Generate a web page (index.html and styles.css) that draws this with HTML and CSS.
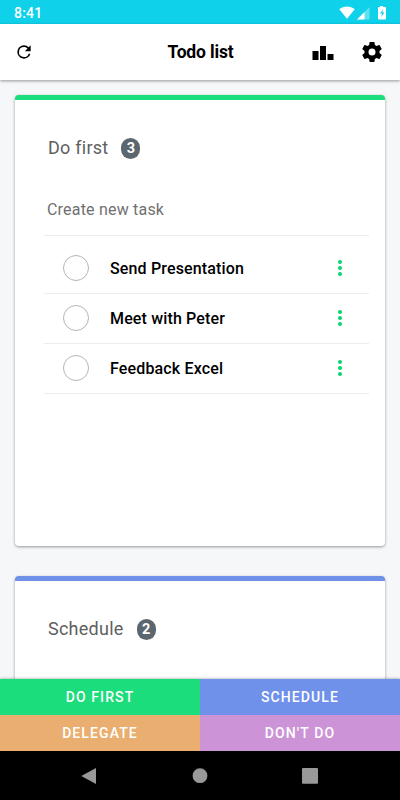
FILE: index.html
```html
<!DOCTYPE html>
<html lang="en">
<head>
    <meta charset="UTF-8">
    <meta name="viewport" content="width=device-width, initial-scale=1.0">
    <title>Todo list</title>
    <link rel="stylesheet" href="styles.css">
</head>
<body>

    <div class="status-bar">
        <span class="clock">8:41</span>
        <svg class="status-icons" width="48" height="16" viewBox="0 0 48 16">
            <path d="M0.3 4.2C4.8 0.6 11.2 0.6 15.700 4.2L8 13.800z" fill="#fff"/>
            <path d="M30.500 2v12.500H18z" fill="#fff" opacity=".35"/>
            <path d="M25.500 7v7.500H18z" fill="#fff"/>
            <path d="M39 2h2V1h3v1h2q1 0 1 1v10.500q0 1-1 1h-6q-1 0-1-1V3q0-1 1-1z" fill="#fff"/>
            <path d="M44 4.500l-3 4h2l-.8 3.500 3.300-4.500h-2z" fill="#0fd1ea"/>
        </svg>
    </div>

    <header class="toolbar">
        <button class="icon-btn refresh" aria-label="Refresh">
            <svg width="20" height="20" viewBox="0 0 24 24">
                <path d="M17.650 6.350A7.960 7.960 0 0 0 12 4a8 8 0 1 0 7.730 10h-2.080A6 6 0 1 1 12 6c1.660 0 3.140.69 4.220 1.780L13 11h7V4z"/>
            </svg>
        </button>
        <h1>Todo list</h1>
        <button class="icon-btn stats" aria-label="Statistics">
            <svg width="22" height="14" viewBox="0 0 22 14">
                <path d="M.5 5h6v9h-6zM8 0h6v14H8zM15.500 8h6v6h-6z"/>
            </svg>
        </button>
        <button class="icon-btn settings" aria-label="Settings">
            <svg width="24" height="24" viewBox="0 0 24 24">
                <path d="M19.430 12.980c.04-.32.07-.64.07-.98s-.03-.66-.07-.98l2.110-1.650c.19-.15.24-.42.12-.64l-2-3.460c-.12-.22-.39-.3-.61-.22l-2.490 1c-.52-.4-1.080-.73-1.690-.98l-.38-2.650C14.460 2.180 14.250 2 14 2h-4c-.25 0-.46.18-.49.42l-.38 2.650c-.61.25-1.170.59-1.690.98l-2.490-1c-.23-.09-.49 0-.61.22l-2 3.460c-.13.22-.07.49.12.64l2.110 1.650c-.04.32-.07.65-.07.98s.03.66.07.98l-2.110 1.650c-.19.15-.24.42-.12.64l2 3.460c.12.22.39.3.61.22l2.490-1c.52.4 1.080.73 1.690.98l.38 2.650c.03.24.24.42.49.42h4c.25 0 .46-.18.49-.42l.38-2.650c.61-.25 1.170-.59 1.690-.98l2.490 1c.23.09.49 0 .61-.22l2-3.460c.12-.22.07-.49-.12-.64zM12 15.500a3.500 3.500 0 1 1 0-7 3.500 3.500 0 0 1 0 7z"/>
            </svg>
        </button>
    </header>

    <main class="content">
        <section class="card first">
            <h2>Do first <span class="badge">3</span></h2>
            <div class="new-task">Create new task</div>
            <ul class="tasks">
                <li>
                    <span class="check"></span>
                    <span class="name">Send Presentation</span>
                    <span class="more"><i></i><i></i><i></i></span>
                </li>
                <li>
                    <span class="check"></span>
                    <span class="name">Meet with Peter</span>
                    <span class="more"><i></i><i></i><i></i></span>
                </li>
                <li>
                    <span class="check"></span>
                    <span class="name">Feedback Excel</span>
                    <span class="more"><i></i><i></i><i></i></span>
                </li>
            </ul>
        </section>

        <section class="card schedule">
            <h2>Schedule <span class="badge">2</span></h2>
        </section>
    </main>

    <nav class="tabs">
        <button class="tab tab-first">DO FIRST</button>
        <button class="tab tab-schedule">SCHEDULE</button>
        <button class="tab tab-delegate">DELEGATE</button>
        <button class="tab tab-dont">DON'T DO</button>
    </nav>

    <div class="nav-bar">
        <svg width="16" height="18" viewBox="0 0 16 18"><path d="M15 1v16L.3 9z"/></svg>
        <svg width="16" height="18" viewBox="0 0 16 18"><circle cx="8" cy="8.700" r="7.400"/></svg>
        <svg width="16" height="18" viewBox="0 0 16 18"><rect y="1" width="16" height="15.700" rx="1"/></svg>
    </div>

</body>
</html>
```
FILE: styles.css
```css
* {
    box-sizing: border-box;
}
body {
    display: flex;
    flex-direction: column;
    height: 800px;
    margin: 0;
    overflow: hidden;
    font-family: Roboto, sans-serif;
    background-color: #f6f7f9;
}
button {
    padding: 0;
    border: 0;
    background: none;
    font-family: inherit;
}
svg {
    display: block;
}

/* top bars */
.status-bar {
    display: flex;
    flex: none;
    align-items: center;
    justify-content: space-between;
    height: 24px;
    padding: 1px 13px 0 14px;
    color: #fff;
    background-color: #0fd1ea;
}
.clock {
    font-size: 14px;
    font-weight: 500;
    letter-spacing: 0.2px;
}
.toolbar {
    display: grid;
    flex: none;
    grid-template-columns: 49px 1fr 49px 49px;
    align-items: center;
    height: 56px;
    z-index: 1;
    background-color: #fff;
    box-shadow: 0 1px 3px rgba(0, 0, 0, 0.4);
}
.toolbar h1 {
    margin: 0;
    padding-left: 50px;
    padding-bottom: 1px;
    font-size: 17.5px;
    font-weight: 700;
    line-height: 20px;
    letter-spacing: -0.15px;
    text-align: center;
}
.icon-btn {
    display: flex;
    justify-content: center;
}
.refresh svg {
    margin-right: 1px;
}
.stats {
    padding: 2px 8px 0 0;
}
.settings {
    padding-right: 8px;
}

/* cards */
.content {
    flex: 1;
    min-height: 0;
    padding: 15px;
    overflow: hidden;
}
.card {
    height: 451px;
    margin-bottom: 30px;
    padding: 29px 16px 0 29px;
    border-top: 5px solid #1bdd7b;
    border-radius: 4px;
    background-color: #fff;
    box-shadow: 0 1px 3px rgba(0, 0, 0, 0.4);
}
.schedule {
    border-top-color: #6f91ea;
}
.card h2 {
    display: flex;
    align-items: center;
    gap: 13px;
    height: 36px;
    margin: 0;
    padding-left: 4px;
    font-size: 18px;
    font-weight: 400;
    letter-spacing: 0.25px;
    color: #606060;
}
.badge {
    width: 19px;
    height: 21px;
    margin-top: 3px;
    border-radius: 10px;
    font-size: 14.5px;
    font-weight: 700;
    line-height: 21px;
    letter-spacing: 0;
    text-align: center;
    color: #fff;
    background-color: #5c666e;
}
.new-task {
    height: 71px;
    padding: 35px 0 0 3px;
    border-bottom: 1px solid #ececec;
    font-size: 16px;
    line-height: 20px;
    letter-spacing: 0.2px;
    color: #707070;
}
.tasks {
    margin: 0;
    padding: 8px 0 0;
    list-style: none;
}
.tasks li {
    display: flex;
    align-items: center;
    height: 50px;
    padding: 0 27px 1px 19px;
    border-bottom: 1px solid #ececec;
}
.check {
    width: 26px;
    height: 26px;
    border: 1px solid #b5b5b5;
    border-radius: 50%;
}
.name {
    flex: 1;
    padding-left: 21px;
    font-size: 16px;
    font-weight: 500;
    letter-spacing: 0.15px;
}
.more {
    display: grid;
    gap: 2px;
}
.more i {
    width: 4px;
    height: 4px;
    border-radius: 50%;
    background-color: #06d76d;
}

/* bottom bars */
.tabs {
    display: grid;
    flex: none;
    grid-template-columns: 1fr 1fr;
    grid-template-rows: 36px 36px;
    z-index: 1;
    box-shadow: 0 0 3px rgba(0, 0, 0, 0.4);
}
.tab {
    font-size: 14px;
    font-weight: 500;
    letter-spacing: 1.1px;
    color: #fff;
}
.tab-first {
    background-color: #1bdd7b;
}
.tab-schedule {
    background-color: #6f91ea;
}
.tab-delegate {
    background-color: #eaaf70;
}
.tab-dont {
    background-color: #cc94d6;
}
.nav-bar {
    display: flex;
    flex: none;
    align-items: center;
    justify-content: space-between;
    height: 49px;
    padding: 0 82px 0 81px;
    background-color: #000;
    fill: #999;
}
```
